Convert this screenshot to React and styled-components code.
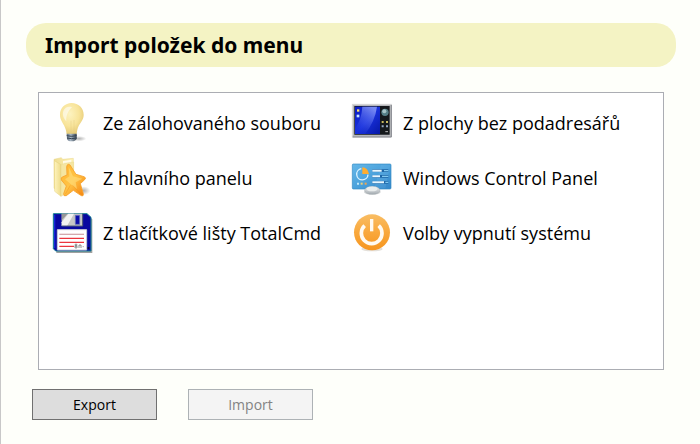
import React from "react";
import styled, { createGlobalStyle } from "styled-components";

const GlobalStyle = createGlobalStyle`
  * {
    box-sizing: border-box;
  }

  body {
    margin: 0;
    background: #fefffa;
    color: #000;
    font-family: "Open Sans", "Noto Sans", "Liberation Sans", sans-serif;
  }
`;

const Page = styled.main`
  min-height: 100vh;
  padding: 23px 24px 24px 25px;
  border-left: 1px solid #c8c8c8;
`;

const Title = styled.h1`
  margin: 0 0 25px;
  padding: 0 19px;
  border-radius: 20px;
  background: #f4f3c4;
  font-family: "Noto Sans", "Open Sans", sans-serif;
  font-size: 21px;
  font-weight: 700;
  line-height: 44px;
`;

const SourceList = styled.ul`
  display: grid;
  grid-template-columns: repeat(auto-fill, 300px);
  align-content: start;
  min-height: 278px;
  margin: 0 12px 19px;
  padding: 2px 0 0 12px;
  border: 1px solid #abadb3;
  background: #fff;
  list-style: none;
`;

const SourceButton = styled.button`
  display: flex;
  align-items: center;
  gap: 10px;
  width: 100%;
  height: 55px;
  padding: 0;
  border: 0;
  background: transparent;
  color: inherit;
  font-family: inherit;
  font-size: 18px;
  line-height: 24px;
  text-align: left;
  white-space: nowrap;
`;

const Icon = styled.svg`
  flex: none;
  width: 42px;
  height: 42px;
`;

const Actions = styled.div`
  display: flex;
  gap: 31px;
  padding: 0 6px;
`;

const ActionButton = styled.button`
  width: 125px;
  height: 31px;
  padding: 0;
  border: 1px solid #707070;
  background: #ddd;
  color: #000;
  font-family: inherit;
  font-size: 14px;
  line-height: 20px;

  &:disabled {
    border-color: #adb2b5;
    background: #f4f4f4;
    color: #838383;
  }
`;

function BulbIcon() {
  return (
    <Icon viewBox="0 0 126 126" aria-hidden="true">
      <defs>
        <radialGradient id="bulbGlass" cx="0.42" cy="0.35" r="0.65">
          <stop offset="0" stopColor="#fdf3c0" />
          <stop offset="0.6" stopColor="#f8e49a" />
          <stop offset="1" stopColor="#e6cb78" />
        </radialGradient>
        <linearGradient id="bulbBase">
          <stop offset="0" stopColor="#5d6c7c" />
          <stop offset="0.4" stopColor="#a9b8c5" />
          <stop offset="1" stopColor="#35414e" />
        </linearGradient>
        <radialGradient id="bulbShade">
          <stop offset="0" stopColor="#000" stopOpacity="0.3" />
          <stop offset="1" stopColor="#000" stopOpacity="0" />
        </radialGradient>
      </defs>
      <ellipse cx="84" cy="110" rx="22" ry="8" fill="url(#bulbShade)" />
      <path
        d="M62 3C42 3 27 18 27 38C27 52 34 60 39 70C44 80 46 88 47 97H77C78 88 79 79 84 70C90 60 98 52 98 38C98 18 82 3 62 3Z"
        fill="url(#bulbGlass)"
      />
      <path d="M37 27C33 38 38 50 46 58C45 42 50 27 63 16C52 12 41 17 37 27Z" fill="#fff" opacity="0.55" />
      <path d="M60 56V91M69 54V91" stroke="#e5ca80" strokeWidth="3" opacity="0.4" />
      <path d="M47 95H77V110Q75 117 62 118Q50 118 48 110Z" fill="url(#bulbBase)" />
      <path d="M47 101Q61 105 77 101M48 108Q61 112 77 108" fill="none" stroke="#344252" strokeWidth="3" />
    </Icon>
  );
}

function FolderStarIcon() {
  return (
    <Icon viewBox="0 0 126 126" aria-hidden="true">
      <defs>
        <linearGradient id="folderBack">
          <stop offset="0" stopColor="#efdd91" />
          <stop offset="1" stopColor="#fff2b4" />
        </linearGradient>
        <linearGradient id="folderFront">
          <stop offset="0" stopColor="#fff4be" />
          <stop offset="1" stopColor="#eedb89" />
        </linearGradient>
        <linearGradient id="star" x1="0" y1="0" x2="1" y2="1">
          <stop offset="0" stopColor="#ffb52d" />
          <stop offset="0.5" stopColor="#ffc346" />
          <stop offset="1" stopColor="#f57f0b" />
        </linearGradient>
        <radialGradient id="folderShade">
          <stop offset="0" stopColor="#000" stopOpacity="0.3" />
          <stop offset="1" stopColor="#000" stopOpacity="0" />
        </radialGradient>
      </defs>
      <ellipse cx="98" cy="101" rx="20" ry="13" fill="url(#folderShade)" />
      <path d="M9 7L31 2L35 7L67 4V92L30 104L9 94Z" fill="url(#folderBack)" stroke="#e9d68e" strokeWidth="1.5" />
      <path d="M36 12L61 8V84L35 91Z" fill="#fffbe7" />
      <path d="M10 11L30 23V118L11 103Z" fill="url(#folderFront)" stroke="#e5ce78" strokeWidth="1.5" />
      <path d="M30 24L40 19L68 15V97L30 118Z" fill="#f5e6a2" stroke="#e5d083" />
      <path
        d="M52 22Q57 21 61 30L75 52L99 59Q107 62 101 68L88 80L97 110Q98 120 89 115L67 100L46 116Q37 119 38 110L46 87L31 69Q28 61 36 59L48 54L47 30Q47 23 52 22Z"
        fill="url(#star)"
        stroke="#f7a12b"
        strokeWidth="2.5"
        strokeLinejoin="round"
      />
      <path d="M53 29L66 58L94 65L74 76L78 97L59 81L42 67L55 58Z" fill="#ffe184" opacity="0.55" />
      <path d="M58 85L43 111M65 85L91 112" fill="none" stroke="#f18a11" strokeWidth="3" opacity="0.35" />
    </Icon>
  );
}

function FloppyIcon() {
  return (
    <Icon viewBox="0 0 126 126" aria-hidden="true">
      <path d="M14 11H112L124 22V123H16Z" fill="#777" opacity="0.7" />
      <path d="M7 5H108L120 16V117H14L7 110Z" fill="#0808a0" stroke="#168291" strokeWidth="3" />
      <path d="M11 8V108" stroke="#1626d9" strokeWidth="4" />
      <path d="M32 5H94V42H32Z" fill="#c6c6c6" />
      <path d="M52 5H69L48 42H32V31Z" fill="#f2f2f2" />
      <path d="M35 5H50L32 25V5Z" fill="#969696" />
      <path d="M73 10H86V37H73Z" fill="#0b0baa" stroke="#6875bf" strokeWidth="2" />
      <path d="M95 5V42H32" fill="none" stroke="#525e77" strokeWidth="3" />
      <path d="M19 53H107V114H19Z" fill="#fff" stroke="#c8cad5" strokeWidth="3" />
      <path d="M25 79H99M25 91H99M25 103H69" stroke="#eb353d" strokeWidth="4" />
      <path d="M25 67H99" stroke="#d3a9ad" strokeWidth="4" />
      <ellipse cx="75" cy="99" rx="3" ry="3" fill="none" stroke="#555" strokeWidth="2" />
      <ellipse cx="75" cy="105" rx="4" ry="3" fill="none" stroke="#555" strokeWidth="2" />
      <path d="M84 108V99H90V108M95 104H98" fill="none" stroke="#555" strokeWidth="2" />
      <path d="M110 105H115V111H110Z" fill="#05052d" />
    </Icon>
  );
}

function DesktopIcon() {
  return (
    <Icon viewBox="0 0 126 126" aria-hidden="true">
      <defs>
        <linearGradient id="screen" x1="0" y1="0" x2="1" y2="1">
          <stop offset="0" stopColor="#0a1cc4" />
          <stop offset="0.5" stopColor="#1830dc" />
          <stop offset="1" stopColor="#0618a5" />
        </linearGradient>
        <linearGradient id="screenShine" x1="0.7" y1="0" x2="0.2" y2="1">
          <stop offset="0" stopColor="#97a8fa" stopOpacity="0.75" />
          <stop offset="0.6" stopColor="#5269f0" stopOpacity="0.4" />
          <stop offset="1" stopColor="#3048e6" stopOpacity="0" />
        </linearGradient>
      </defs>
      <path d="M4 6H122V106H4Z" fill="#b7b8bb" />
      <path d="M4 106V7H122" fill="none" stroke="#dadada" strokeWidth="3" />
      <path d="M5 105H121V9" fill="none" stroke="#85878d" strokeWidth="3" />
      <path d="M10 12H116V98H10Z" fill="#15191c" />
      <path d="M12 14H87V96H12Z" fill="url(#screen)" />
      <path d="M34 14H78Q72 58 42 96H12V80Q32 52 34 14Z" fill="url(#screenShine)" />
      <path d="M18 22H25V29H18Z" fill="#ffe271" />
      <path d="M17 38H25V46H17Z" fill="#c7e4ff" />
      <circle cx="102" cy="31" r="11" fill="#557f87" />
      <circle cx="100" cy="28" r="6" fill="#a6c4c7" />
      <path d="M92 57H98V63H92ZM105 57H111V63H105Z" fill="#c9b95e" />
      <path d="M92 70H98V76H92ZM105 70H111V76H105Z" fill="#96abc5" />
      <path d="M103 89H111" stroke="#b8b8b8" strokeWidth="3" />
    </Icon>
  );
}

function ControlPanelIcon() {
  return (
    <Icon viewBox="0 0 126 126" aria-hidden="true">
      <defs>
        <linearGradient id="panel" x1="0" y1="0" x2="1" y2="1">
          <stop offset="0" stopColor="#65b7e8" />
          <stop offset="0.5" stopColor="#4ba2dc" />
          <stop offset="1" stopColor="#3385c8" />
        </linearGradient>
        <linearGradient id="disc" x1="0" y1="0" x2="0" y2="1">
          <stop offset="0" stopColor="#f2f2f2" />
          <stop offset="1" stopColor="#a3abb1" />
        </linearGradient>
      </defs>
      <rect x="4" y="21" width="116" height="75" rx="3" fill="url(#panel)" stroke="#338bc4" strokeWidth="2" />
      <path d="M6 23H118L103 94H70L90 23Z" fill="#8acbf0" opacity="0.15" />
      <path d="M31 35A17 17 0 1 0 51 53" fill="none" stroke="#d9f2ff" strokeWidth="4" />
      <path d="M34 51V31Q50 32 54 51Z" fill="#ffad30" />
      <path d="M18 77H24V83H18Z" fill="#bfe8fa" />
      <path d="M29 77H35V83H29Z" fill="#f2ce71" />
      <path d="M41 77H47V83H41Z" fill="#f2a44d" />
      <path d="M64 41H112M64 58H112M64 76H112" stroke="#1e67a8" strokeWidth="8" />
      <path d="M64 41H92M64 58H87M64 76H99" stroke="#e8f7ff" strokeWidth="6" />
      <path d="M99 41H112M93 58H112M103 76H112" stroke="#82c9f0" strokeWidth="4" />
      <ellipse cx="64" cy="105" rx="25" ry="8" fill="#858d92" opacity="0.4" />
      <ellipse cx="64" cy="100" rx="23" ry="12" fill="url(#disc)" stroke="#9ca3a8" />
      <ellipse cx="63" cy="96" rx="16" ry="7" fill="#e9eded" />
    </Icon>
  );
}

function PowerIcon() {
  return (
    <Icon viewBox="0 0 126 126" aria-hidden="true">
      <defs>
        <linearGradient id="power" x1="0" y1="0" x2="0" y2="1">
          <stop offset="0" stopColor="#f9bd63" />
          <stop offset="0.5" stopColor="#f9a83c" />
          <stop offset="1" stopColor="#f6951e" />
        </linearGradient>
      </defs>
      <ellipse cx="63" cy="111" rx="32" ry="7" fill="#b3a795" opacity="0.35" />
      <circle cx="63" cy="61" r="54" fill="url(#power)" />
      <path d="M41 41A31 31 0 1 0 83 41" fill="none" stroke="#fffaf1" strokeWidth="11" />
      <path d="M62 21V58" stroke="#fffaf1" strokeWidth="10" />
    </Icon>
  );
}

const sources = [
  { label: "Ze zálohovaného souboru", icon: BulbIcon },
  { label: "Z plochy bez podadresářů", icon: DesktopIcon },
  { label: "Z hlavního panelu", icon: FolderStarIcon },
  { label: "Windows Control Panel", icon: ControlPanelIcon },
  { label: "Z tlačítkové lišty TotalCmd", icon: FloppyIcon },
  { label: "Volby vypnutí systému", icon: PowerIcon },
];

function App() {
  return (
    <>
      <GlobalStyle />
      <Page>
        <Title>Import položek do menu</Title>
        <SourceList>
          {sources.map(({ label, icon: SourceIcon }) => (
            <li key={label}>
              <SourceButton type="button">
                <SourceIcon />
                {label}
              </SourceButton>
            </li>
          ))}
        </SourceList>
        <Actions>
          <ActionButton type="button">Export</ActionButton>
          <ActionButton type="button" disabled>
            Import
          </ActionButton>
        </Actions>
      </Page>
    </>
  );
}

export default App;
